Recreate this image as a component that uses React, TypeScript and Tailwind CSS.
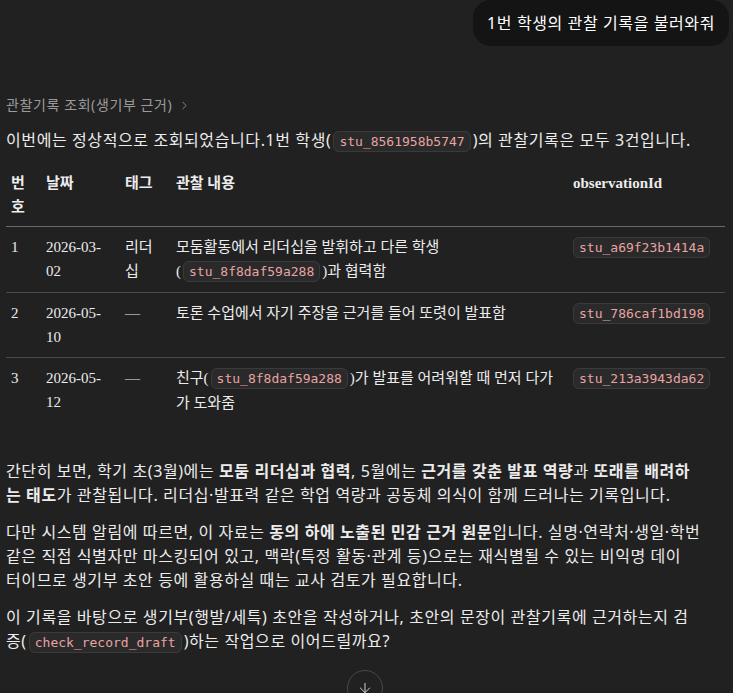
import { ArrowDown, ChevronRight } from 'lucide-react';

const sans = { fontFamily: '"Noto Sans", "Noto Sans CJK KR", sans-serif' };

function Code({ children, flush }: { children: string; flush?: boolean }) {
  return (
    <code
      className={`${flush ? '' : 'mx-[2px]'} rounded-md border border-[#3a3a3a] bg-[#2a2a2a] px-[5px] py-[2px] font-['DejaVu_Sans_Mono',monospace] text-[13px] tracking-normal text-[#e8a3a3]`}
    >
      {children}
    </code>
  );
}

const rows = [
  {
    no: '1',
    date: '2026-03-02',
    tag: '리더십',
    content: (
      <>
        모둠활동에서 리더십을 발휘하고 다른 학생 (<Code>stu_8f8daf59a288</Code>)과 협력함
      </>
    ),
    id: 'stu_a69f23b1414a',
  },
  {
    no: '2',
    date: '2026-05-10',
    tag: '—',
    content: <>토론 수업에서 자기 주장을 근거를 들어 또렷이 발표함</>,
    id: 'stu_786caf1bd198',
  },
  {
    no: '3',
    date: '2026-05-12',
    tag: '—',
    content: (
      <>
        친구(<Code>stu_8f8daf59a288</Code>)가 발표를 어려워할 때 먼저 다가가 도와줌
      </>
    ),
    id: 'stu_213a3943da62',
  },
];

export default function App() {
  return (
    <div className="relative h-[693px] overflow-hidden bg-[#212121] tracking-[0.6px] text-[#ececec]" style={sans}>
      <div className="flex justify-end pr-[4px]">
        <div className="rounded-[18px] bg-[#141414] px-[14px] py-[10px] text-[16px] leading-[26px] text-white">
          1번 학생의 관찰 기록을 불러와줘
        </div>
      </div>

      <div className="px-[6px]">
        <div className="mt-[48px] flex items-center gap-[6px] text-[14px] leading-[22px] text-[#9b9b9b]">
          관찰기록 조회(생기부 근거)
          <ChevronRight className="h-[13px] w-[13px]" strokeWidth={1.5} />
        </div>

        <p className="mt-[12px] max-w-[695px] text-[16px] leading-[24px]">
          이번에는 정상적으로 조회되었습니다.1번 학생(<Code>stu_8561958b5747</Code>)의 관찰기록은 모두 3건입니다.
        </p>

        <table
          className="mt-[10px] w-[719px] table-fixed border-collapse text-left text-[15px] leading-[24px] tracking-normal"
          style={{ fontFamily: '"Liberation Serif", "Noto Sans CJK KR", serif' }}
        >
          <colgroup>
            <col className="w-[35px]" />
            <col className="w-[79px]" />
            <col className="w-[51px]" />
            <col className="w-[397px]" />
            <col />
          </colgroup>
          <thead>
            <tr className="border-b border-[#6a6a6a]">
              <th className="px-[5px] py-[7px] align-top font-bold">번호</th>
              <th className="px-[5px] py-[7px] align-top font-bold">날짜</th>
              <th className="px-[5px] py-[7px] align-top font-bold">태그</th>
              <th className="px-[5px] py-[7px] align-top font-bold">관찰 내용</th>
              <th className="px-[5px] py-[7px] align-top font-bold">observationId</th>
            </tr>
          </thead>
          <tbody>
            {rows.map((r, i) => (
              <tr key={r.no} className={i < rows.length - 1 ? 'border-b border-[#4a4a4a]' : ''}>
                <td className="px-[5px] py-[8px] align-top">{r.no}</td>
                <td className="px-[5px] py-[8px] align-top">{r.date}</td>
                <td className="px-[5px] py-[8px] align-top">{r.tag}</td>
                <td className="py-[8px] pl-[5px] pr-[9px] align-top">{r.content}</td>
                <td className="px-[5px] py-[8px] align-top">
                  <Code flush>{r.id}</Code>
                </td>
              </tr>
            ))}
          </tbody>
        </table>

        <div className="mt-[36px] max-w-[695px] space-y-[13px] text-[16px] leading-[24px]">
          <p>
            간단히 보면, 학기 초(3월)에는 <b>모둠 리더십과 협력</b>, 5월에는 <b>근거를 갖춘 발표 역량</b>과{' '}
            <b>또래를 배려하는 태도</b>가 관찰됩니다. 리더십·발표력 같은 학업 역량과 공동체 의식이 함께 드러나는 기록입니다.
          </p>
          <p>
            다만 시스템 알림에 따르면, 이 자료는 <b>동의 하에 노출된 민감 근거 원문</b>입니다. 실명·연락처·생일·학번
            같은 직접 식별자만 마스킹되어 있고, 맥락(특정 활동·관계 등)으로는 재식별될 수 있는 비익명 데이
            <br />
            터이므로 생기부 초안 등에 활용하실 때는 교사 검토가 필요합니다.
          </p>
          <p>
            이 기록을 바탕으로 생기부(행발/세특) 초안을 작성하거나, 초안의 문장이 관찰기록에 근거하는지 검증(
            <Code>check_record_draft</Code>)하는 작업으로 이어드릴까요?
          </p>
        </div>
      </div>

      <button className="absolute bottom-[-13px] left-[347px] flex h-[36px] w-[36px] items-center justify-center rounded-full border border-[#484848] bg-[#212121] text-[#cfcfcf]">
        <ArrowDown className="h-[16px] w-[16px]" strokeWidth={1.5} />
      </button>
    </div>
  );
}
